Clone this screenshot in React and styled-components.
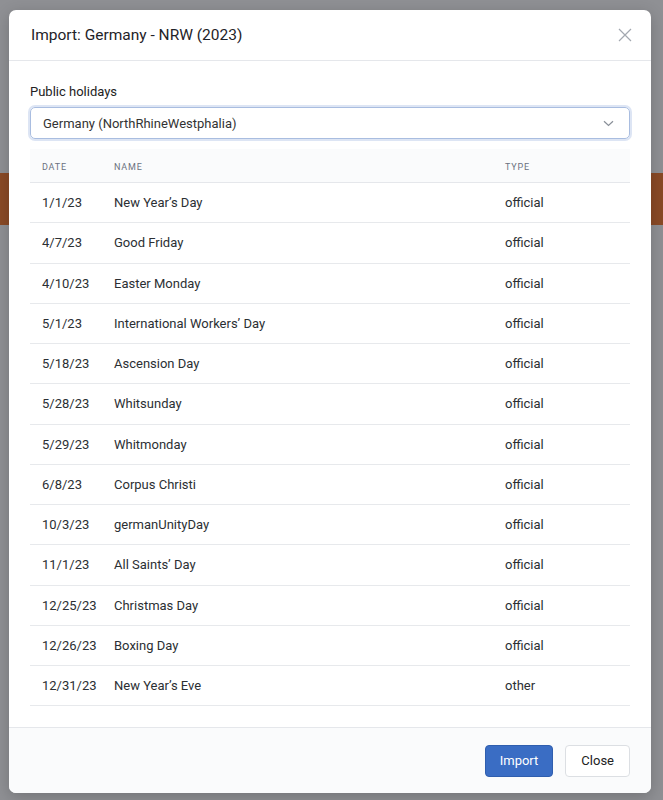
import React from 'react'
import styled, { createGlobalStyle } from 'styled-components'

const GlobalStyle = createGlobalStyle`
  html, body {
    margin: 0;
    padding: 0;
    height: 100%;
  }
  body {
    font-family: Roboto, "Liberation Sans", Arial, sans-serif;
    background: #8f9094;
  }
`

const holidays = [
  { date: '1/1/23', name: 'New Year’s Day', type: 'official' },
  { date: '4/7/23', name: 'Good Friday', type: 'official' },
  { date: '4/10/23', name: 'Easter Monday', type: 'official' },
  { date: '5/1/23', name: 'International Workers’ Day', type: 'official' },
  { date: '5/18/23', name: 'Ascension Day', type: 'official' },
  { date: '5/28/23', name: 'Whitsunday', type: 'official' },
  { date: '5/29/23', name: 'Whitmonday', type: 'official' },
  { date: '6/8/23', name: 'Corpus Christi', type: 'official' },
  { date: '10/3/23', name: 'germanUnityDay', type: 'official' },
  { date: '11/1/23', name: 'All Saints’ Day', type: 'official' },
  { date: '12/25/23', name: 'Christmas Day', type: 'official' },
  { date: '12/26/23', name: 'Boxing Day', type: 'official' },
  { date: '12/31/23', name: 'New Year’s Eve', type: 'other' },
]

function App() {
  return (
    <Page>
      <GlobalStyle />
      <Band />
      <Overlay>
        <Modal>
          <Header>
            <Title>Import: Germany - NRW (2023)</Title>
            <CloseIcon aria-label="close">
              <svg width="14" height="14" viewBox="0 0 14 14">
                <path d="M1 1L13 13M13 1L1 13" stroke="#a3a8b0" strokeWidth="1.2" fill="none" />
              </svg>
            </CloseIcon>
          </Header>
          <Body>
            <Label>Public holidays</Label>
            <Select>
              <span>Germany (NorthRhineWestphalia)</span>
              <svg width="11" height="7" viewBox="0 0 11 7">
                <path d="M1 1.2L5.5 5.5L10 1.2" stroke="#8a9099" strokeWidth="1.2" fill="none" />
              </svg>
            </Select>
            <Table>
              <thead>
                <tr>
                  <Th $w="60px">Date</Th>
                  <Th>Name</Th>
                  <Th $w="125px">Type</Th>
                </tr>
              </thead>
              <tbody>
                {holidays.map((h) => (
                  <tr key={h.date}>
                    <Td>{h.date}</Td>
                    <Td>{h.name}</Td>
                    <Td>{h.type}</Td>
                  </tr>
                ))}
              </tbody>
            </Table>
          </Body>
          <Footer>
            <PrimaryButton>Import</PrimaryButton>
            <Button>Close</Button>
          </Footer>
        </Modal>
      </Overlay>
    </Page>
  )
}

export default App

const Page = styled.div`
  position: relative;
  width: 100%;
  height: 800px;
  padding-top: 173px;
  box-sizing: border-box;
  overflow: hidden;
`

const Band = styled.div`
  height: 52px;
  background: #8a4a26;
`

const Overlay = styled.div`
  position: absolute;
  inset: 0;
  padding: 10px 12px 7px 9px;
  box-sizing: border-box;
`

const Modal = styled.div`
  width: 642px;
  height: 783px;
  background: #fff;
  border-radius: 7px;
  display: flex;
  flex-direction: column;
  overflow: hidden;
  box-shadow: 0 4px 16px rgba(0, 0, 0, 0.2);
`

const Header = styled.div`
  height: 51px;
  box-sizing: border-box;
  border-bottom: 1px solid #e5e7eb;
  display: flex;
  align-items: center;
  justify-content: space-between;
  padding: 0 19px 0 22px;
`

const Title = styled.h2`
  margin: 0;
  font-size: 15.5px;
  font-weight: 400;
  color: #1f2328;
`

const CloseIcon = styled.div`
  display: flex;
  align-items: center;
  cursor: pointer;
`

const Body = styled.div`
  flex: 1;
  padding: 23px 21px 0 21px;
`

const Label = styled.div`
  font-size: 13px;
  color: #222;
  margin-bottom: 8px;
`

const Select = styled.div`
  height: 32px;
  box-sizing: border-box;
  border: 1px solid #a9bde0;
  box-shadow: 0 0 0 2px #dde5f4;
  border-radius: 5px;
  display: flex;
  align-items: center;
  justify-content: space-between;
  padding: 0 15px 0 12px;
  font-size: 13px;
  color: #333;
`

const Table = styled.table`
  width: 100%;
  border-collapse: collapse;
  margin-top: 10px;
`

const Th = styled.th`
  width: ${(p) => p.$w || 'auto'};
  text-align: left;
  height: 30px;
  padding: 3px 0 0 12px;
  background: #fafbfc;
  border-bottom: 1px solid #e5e7eb;
  font-size: 9px;
  font-weight: 400;
  letter-spacing: 0.8px;
  text-transform: uppercase;
  color: #6b7280;
`

const Td = styled.td`
  height: 39.25px;
  padding: 0 0 0 12px;
  border-bottom: 1px solid #e7e9ec;
  font-size: 13px;
  color: #2b2f33;
`

const Footer = styled.div`
  height: 66px;
  box-sizing: border-box;
  border-top: 1px solid #e5e7eb;
  background: #fafbfc;
  display: flex;
  align-items: center;
  justify-content: flex-end;
  gap: 12px;
  padding: 0 21px 0 0;
`

const Button = styled.button`
  height: 32px;
  padding: 0 15px;
  border: 1px solid #dcdfe3;
  border-radius: 4px;
  background: #fff;
  font-family: inherit;
  font-size: 13px;
  color: #222;
  cursor: pointer;
`

const PrimaryButton = styled(Button)`
  background: #3a6dc4;
  border-color: #2f5eae;
  color: #fff;
  padding: 0 14px;
`
